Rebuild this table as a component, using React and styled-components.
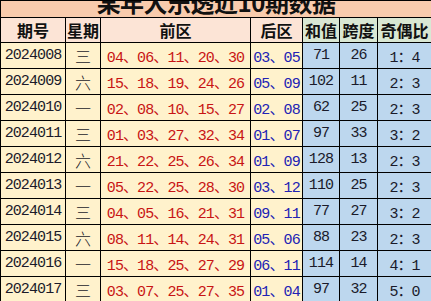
import React from "react";
import styled, { createGlobalStyle } from "styled-components";

const GlobalStyle = createGlobalStyle`
  html, body {
    margin: 0;
    padding: 0;
    background: #ffffff;
    overflow: hidden;
  }
`;

const Table = styled.table`
  border-collapse: collapse;
  table-layout: fixed;
  width: 431px;
  font-family: "Liberation Mono", "Noto Sans CJK SC", monospace;
`;

const TitleCell = styled.td`
  background: #f8cbad;
  border: 1px solid #000;
  height: 16px;
  padding: 0;
`;

const TitleClip = styled.div`
  height: 16px;
  overflow: hidden;
  text-align: center;
`;

const TitleText = styled.div`
  margin-top: -13px;
  font-family: "Noto Sans CJK SC", sans-serif;
  font-size: 24px;
  line-height: 28px;
  font-weight: 700;
  color: #111;
  letter-spacing: -0.5px;
`;

const HeadCell = styled.th`
  background: ${(p) => (p.$stat ? "#d9e7d3" : "#fce4d6")};
  border: 1px solid #000;
  height: 21px;
  padding: 0;
  font-family: "Noto Sans CJK SC", sans-serif;
  font-size: 16px;
  font-weight: 700;
  color: #111;
  text-align: center;
  white-space: nowrap;
  overflow: hidden;
`;

const Cell = styled.td`
  background: ${(p) => (p.$stat ? "#bdd7ee" : "#fff2cc")};
  border: 1px solid #000;
  height: 25px;
  padding: 0;
  font-size: 15px;
  letter-spacing: -0.9px;
  color: ${(p) =>
    p.$tone === "red" ? "#c81414" : p.$tone === "blue" ? "#2222b4" : "#1a1a2a"};
  text-align: center;
  white-space: nowrap;
  overflow: hidden;
`;

const DayCell = styled(Cell)`
  font-family: "Noto Sans CJK SC", sans-serif;
  font-size: 16px;
  font-weight: 300;
  letter-spacing: 0;
`;

const rows = [
  ["2024008", "三", "04、06、11、20、30", "03、05", "71", "26", "1：4"],
  ["2024009", "六", "15、18、19、24、26", "05、09", "102", "11", "2：3"],
  ["2024010", "一", "02、08、10、15、27", "02、08", "62", "25", "2：3"],
  ["2024011", "三", "01、03、27、32、34", "01、07", "97", "33", "3：2"],
  ["2024012", "六", "21、22、25、26、34", "01、09", "128", "13", "2：3"],
  ["2024013", "一", "05、22、25、28、30", "03、12", "110", "25", "2：3"],
  ["2024014", "三", "04、05、16、21、31", "09、11", "77", "27", "3：2"],
  ["2024015", "六", "08、11、14、24、31", "05、06", "88", "23", "2：3"],
  ["2024016", "一", "15、18、25、27、29", "06、11", "114", "14", "4：1"],
  ["2024017", "三", "03、07、25、27、35", "01、04", "97", "32", "5：0"],
];

const widths = [65, 35, 150, 52, 37, 38, 54];

export default function App() {
  return (
    <>
      <GlobalStyle />
      <Table>
        <colgroup>
          {widths.map((w, i) => (
            <col key={i} style={{ width: w }} />
          ))}
        </colgroup>
        <tbody>
          <tr>
            <TitleCell colSpan={7}>
              <TitleClip>
                <TitleText>某年大乐透近10期数据</TitleText>
              </TitleClip>
            </TitleCell>
          </tr>
          <tr>
            <HeadCell>期号</HeadCell>
            <HeadCell>星期</HeadCell>
            <HeadCell>前区</HeadCell>
            <HeadCell>后区</HeadCell>
            <HeadCell $stat>和值</HeadCell>
            <HeadCell $stat>跨度</HeadCell>
            <HeadCell $stat>奇偶比</HeadCell>
          </tr>
          {rows.map((r) => (
            <tr key={r[0]}>
              <Cell>{r[0]}</Cell>
              <DayCell>{r[1]}</DayCell>
              <Cell $tone="red">{r[2]}</Cell>
              <Cell $tone="blue">{r[3]}</Cell>
              <Cell $stat>{r[4]}</Cell>
              <Cell $stat>{r[5]}</Cell>
              <Cell $stat>{r[6]}</Cell>
            </tr>
          ))}
        </tbody>
      </Table>
    </>
  );
}
